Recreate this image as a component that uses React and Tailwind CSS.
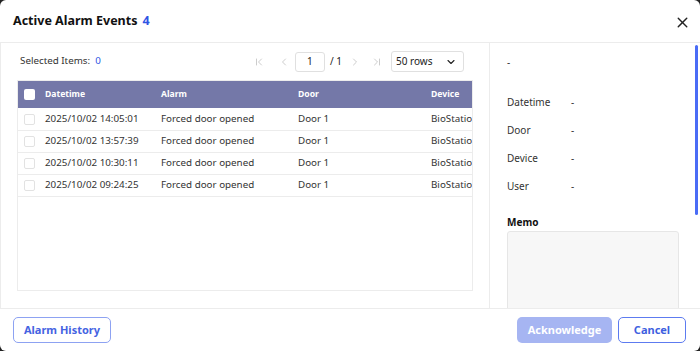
import React from 'react';
import { X, ChevronFirst, ChevronLeft, ChevronRight, ChevronLast, ChevronDown } from 'lucide-react';

const rows = [
  '2025/10/02 14:05:01',
  '2025/10/02 13:57:39',
  '2025/10/02 10:30:11',
  '2025/10/02 09:24:25',
];

const details = ['Datetime', 'Door', 'Device', 'User'];

const App = () => {
  return (
    <div className="w-[700px] h-[351px] bg-[#222]" style={{ fontFamily: '"Noto Sans", sans-serif' }}>
      <div className="w-full h-full bg-white rounded-[6px] flex flex-col overflow-hidden">
        {/* header */}
        <div className="h-[43px] shrink-0 flex items-center justify-between pl-[13px] pr-[9px] border-b border-[#ececec]">
          <div className="text-[12.5px] font-bold text-[#111] flex items-center gap-[5px] mt-[1px]">
            Active Alarm Events
            <span className="text-[#2f55e4]">4</span>
          </div>
          <X className="w-[17px] h-[17px] text-[#222] mt-[2px]" strokeWidth={2} />
        </div>

        {/* body */}
        <div className="flex-1 flex min-h-0 border-b border-[#ececec]">
          <div className="w-[490px] shrink-0 border-r border-l border-[#ececec] pl-[16px] pr-[16px] pt-[8px] pb-[17px] flex flex-col">
            <div className="h-[21px] flex items-center text-[9.8px]">
              <span className="text-[#333] ml-[3px]">Selected Items:</span>
              <span className="text-[#2f55e4] ml-[5px]">0</span>
              <div className="ml-auto mr-[9px] flex items-center text-[#bbb]">
                <ChevronFirst className="w-[12px] h-[12px]" strokeWidth={1.5} />
                <ChevronLeft className="w-[12px] h-[12px] ml-[13px]" strokeWidth={1.5} />
                <div className="ml-[5px] w-[30px] h-[20px] border border-[#e0e0e0] rounded-[3px] flex items-center justify-center text-[#222] text-[10px]">1</div>
                <span className="ml-[5px] text-[#222] text-[10px]">/ 1</span>
                <ChevronRight className="w-[12px] h-[12px] ml-[7px]" strokeWidth={1.5} />
                <ChevronLast className="w-[12px] h-[12px] ml-[10px]" strokeWidth={1.5} />
                <div className="ml-[8px] w-[73px] h-[21px] border border-[#e0e0e0] rounded-[3px] flex items-center justify-between pl-[4px] pr-[6px] text-[#222] text-[10px]">
                  50 rows
                  <ChevronDown className="w-[12px] h-[12px] text-[#222]" strokeWidth={2.2} />
                </div>
              </div>
            </div>

            <div className="mt-[8px] flex-1 border border-[#ececec] overflow-hidden">
              <div className="w-[560px]">
                <div className="h-[27px] bg-[#7478a8] flex items-center text-white font-bold text-[8.6px]">
                  <div className="w-[27px] shrink-0 pl-[6px]">
                    <div className="w-[11px] h-[11px] bg-white rounded-[2px]" />
                  </div>
                  <div className="w-[116px] shrink-0">Datetime</div>
                  <div className="w-[137px] shrink-0">Alarm</div>
                  <div className="w-[133px] shrink-0">Door</div>
                  <div className="shrink-0">Device</div>
                </div>
                {rows.map((r, i) => (
                  <div
                    key={r}
                    className={`${i === 0 ? 'h-[23px]' : 'h-[22px]'} flex items-center border-b border-[#ececec] text-[9.8px] text-[#333]`}
                  >
                    <div className="w-[27px] shrink-0 pl-[6px]">
                      <div className="w-[11px] h-[11px] border border-[#e2e2e2] rounded-[2px]" />
                    </div>
                    <div className="w-[116px] shrink-0">{r}</div>
                    <div className="w-[137px] shrink-0">Forced door opened</div>
                    <div className="w-[133px] shrink-0">Door 1</div>
                    <div className="shrink-0">BioStation</div>
                  </div>
                ))}
              </div>
            </div>
          </div>

          <div className="flex-1 relative pl-[17px] pr-[20px] text-[10px] text-[#333] overflow-hidden">
            <div className="mt-[11px] h-[16px] flex items-center">-</div>
            <div className="mt-[18px] flex flex-col">
              {details.map((d) => (
                <div key={d} className="h-[28px] flex items-center">
                  <span className="w-[64px]">{d}</span>
                  <span>-</span>
                </div>
              ))}
            </div>
            <div className="mt-[15px] font-bold text-[#111]">Memo</div>
            <div className="mt-[1px] w-[172px] h-[100px] bg-[#f7f7f7] border border-[#e6e6e6] rounded-[3px]" />
            <div className="absolute right-[2px] top-[2px] w-[3px] h-[170px] bg-[#4a6cf6] rounded-full" />
          </div>
        </div>

        {/* footer */}
        <div className="h-[42px] shrink-0 flex items-center justify-between pl-[13px] pr-[14px] text-[11px] font-bold">
          <button className="w-[98px] h-[26px] border border-[#8da2f2] rounded-[5px] text-[#4563e2]">
            Alarm History
          </button>
          <div className="flex items-center gap-[6px]">
            <button className="w-[95px] h-[26px] rounded-[5px] bg-[#a6b5f2] text-white">
              Acknowledge
            </button>
            <button className="w-[68px] h-[26px] border border-[#5d7bf0] rounded-[5px] text-[#3e5fe0]">
              Cancel
            </button>
          </div>
        </div>
      </div>
    </div>
  );
};

export default App;
